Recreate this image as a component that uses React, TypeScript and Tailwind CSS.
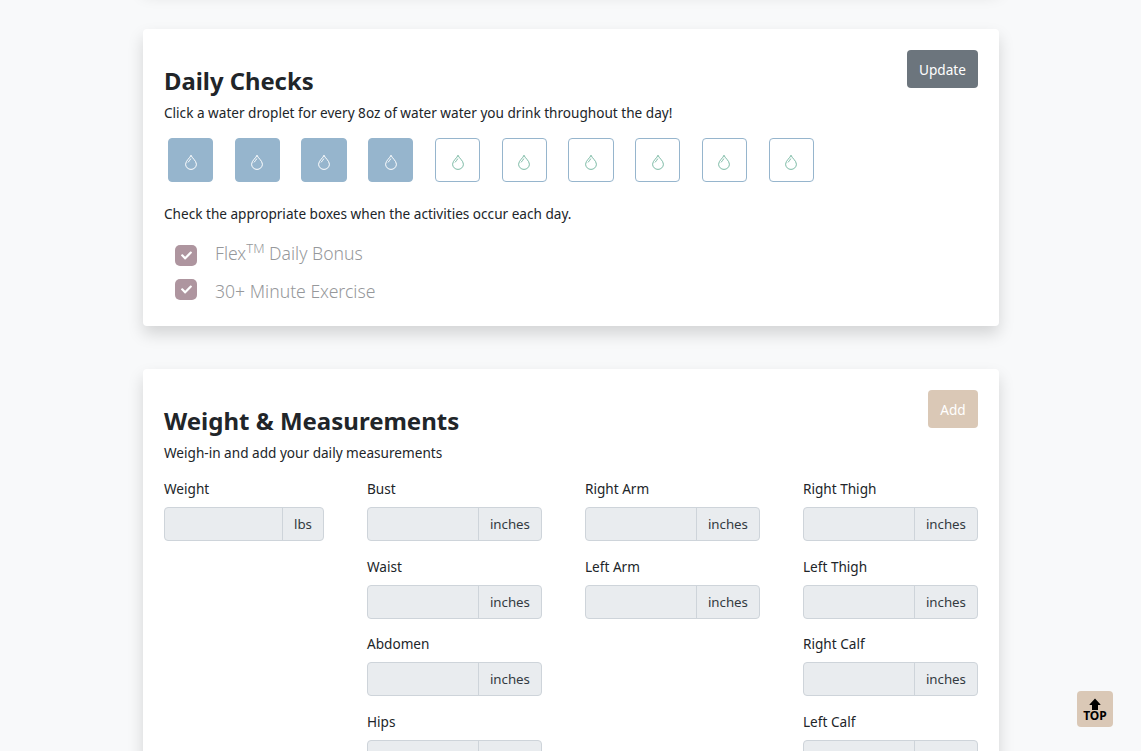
import { ReactNode } from 'react';
import { FaCheck } from 'react-icons/fa';

const font = "font-['Noto_Sans','Open_Sans',sans-serif]";

const Drop = ({ filled }: { filled: boolean }) => (
  <div
    className={
      filled
        ? 'w-[45.25px] h-[44px] pt-[3px] shrink-0 flex items-center justify-center rounded-[4px] border border-[#96b5cd] bg-[#96b5cd]'
        : 'w-[45.25px] h-[44px] pt-[3px] shrink-0 flex items-center justify-center rounded-[4px] border border-[#96b5cd] bg-white'
    }
  >
    <svg
      width="14"
      height="16"
      viewBox="0 0 14 16"
      fill="none"
      stroke={filled ? '#ffffff' : '#7dbba6'}
      strokeWidth="1"
    >
      <path d="M7 1.2C6.4 3.8 1.6 6.6 1.6 10.2a5.4 5.2 0 0 0 10.8 0C12.4 6.6 7.6 3.8 7 1.2Z" />
      <path d="M4 8.4C4.8 7.2 6.2 6.2 6.8 4.6" />
    </svg>
  </div>
);

const CheckRow = ({ children, className, textClass }: { children: ReactNode; className: string; textClass: string }) => (
  <div className={`flex items-center ${className}`}>
    <span className="w-[22px] h-[21px] rounded-[5px] bg-[#ae959f] flex items-center justify-center">
      <FaCheck size={11} color="#ffffff" />
    </span>
    <span className={`ml-[18px] text-[17.6px] text-[#96989b] font-light ${textClass}`}>{children}</span>
  </div>
);

const Field = ({ label, unit }: { label: string; unit: string }) => (
  <div className="mb-[15.67px]">
    <div className="h-[21px] mb-[7px] text-[13.6px] leading-[19px] text-[#212529]">{label}</div>
    <div className="h-[34px] flex rounded-[4px] border border-[#ced4da] bg-[#e9ecef]">
      <div className="flex-1" />
      <div className="h-full px-[11px] border-l border-[#ced4da] text-[13.3px] leading-[33.6px] text-[#333a40]">{unit}</div>
    </div>
  </div>
);

const App = () => {
  const drops = [true, true, true, true, false, false, false, false, false, false];
  return (
    <div className={`h-screen overflow-hidden bg-[#f8f9fa] ${font}`}>
      <div className="w-[856px] ml-[143px]">
        <div className="h-[10px] -mt-[24px] mb-[43px] bg-white rounded-[4px] shadow-[0_8px_16px_rgba(0,0,0,0.15)]" />

        <div className="relative h-[297px] px-[21px] pt-[36px] bg-white rounded-[4px] shadow-[0_8px_16px_rgba(0,0,0,0.15)]">
          <button className="absolute top-[21px] right-[21px] w-[71px] h-[38px] pt-[2px] rounded-[4px] bg-[#6c757d] text-white text-[13.6px]">
            Update
          </button>
          <h2 className="text-[23.8px] leading-[32px] font-bold text-[#212529]">Daily Checks</h2>
          <p className="mt-[4px] text-[13.6px] leading-[24px] text-[#212529]">
            Click a water droplet for every 8oz of water water you drink throughout the day!
          </p>
          <div className="mt-[13px] ml-[4.04px] flex w-[645.73px] justify-between">
            {drops.map((d, i) => (
              <Drop key={i} filled={d} />
            ))}
          </div>
          <p className="mt-[20px] text-[13.6px] leading-[24px] text-[#212529]">
            Check the appropriate boxes when the activities occur each day.
          </p>
          <div className="ml-[11px] mt-[15px]">
            <CheckRow className="h-[28px]" textClass="mb-[4px]">
              Flex<sup className="text-[13px]">TM</sup> Daily Bonus
            </CheckRow>
            <CheckRow className="h-[28px] mt-[6px]" textClass="pt-[4px]">
              30+ Minute Exercise
            </CheckRow>
          </div>
        </div>

        <div className="relative mt-[43px] h-[600px] px-[21px] pt-[36px] bg-white rounded-[4px] shadow-[0_8px_16px_rgba(0,0,0,0.15)]">
          <button className="absolute top-[21px] right-[21px] w-[50px] h-[38px] pt-[2px] rounded-[4px] bg-[#dac8b6] text-white text-[13.6px]">
            Add
          </button>
          <h2 className="text-[24px] leading-[32px] font-bold text-[#212529]">Weight &amp; Measurements</h2>
          <p className="mt-[4px] text-[13.6px] leading-[24px] text-[#212529]">
            Weigh-in and add your daily measurements
          </p>
          <div className="mt-[14px] flex justify-between">
            <div className="w-[160px]">
              <Field label="Weight" unit="lbs" />
            </div>
            <div className="w-[175px] ml-[43px]">
              <Field label="Bust" unit="inches" />
              <Field label="Waist" unit="inches" />
              <Field label="Abdomen" unit="inches" />
              <Field label="Hips" unit="inches" />
            </div>
            <div className="w-[175px] ml-[43px]">
              <Field label="Right Arm" unit="inches" />
              <Field label="Left Arm" unit="inches" />
            </div>
            <div className="w-[175px] ml-[43px]">
              <Field label="Right Thigh" unit="inches" />
              <Field label="Left Thigh" unit="inches" />
              <Field label="Right Calf" unit="inches" />
              <Field label="Left Calf" unit="inches" />
            </div>
          </div>
        </div>
      </div>

      <div className="fixed left-[1077px] top-[691px] w-[36px] h-[36px] rounded-[4px] bg-[#dac8b6] flex flex-col items-center justify-center">
        <svg width="12" height="12" viewBox="0 0 12 12" fill="#000000">
          <path d="M6 0.5L11.5 6.5Q11.5 7 11 7H9V12H3V7H1Q0.5 7 0.5 6.5Z" />
        </svg>
        <span className="text-[12px] leading-[11px] font-bold text-black">TOP</span>
      </div>
    </div>
  );
};

export default App;
